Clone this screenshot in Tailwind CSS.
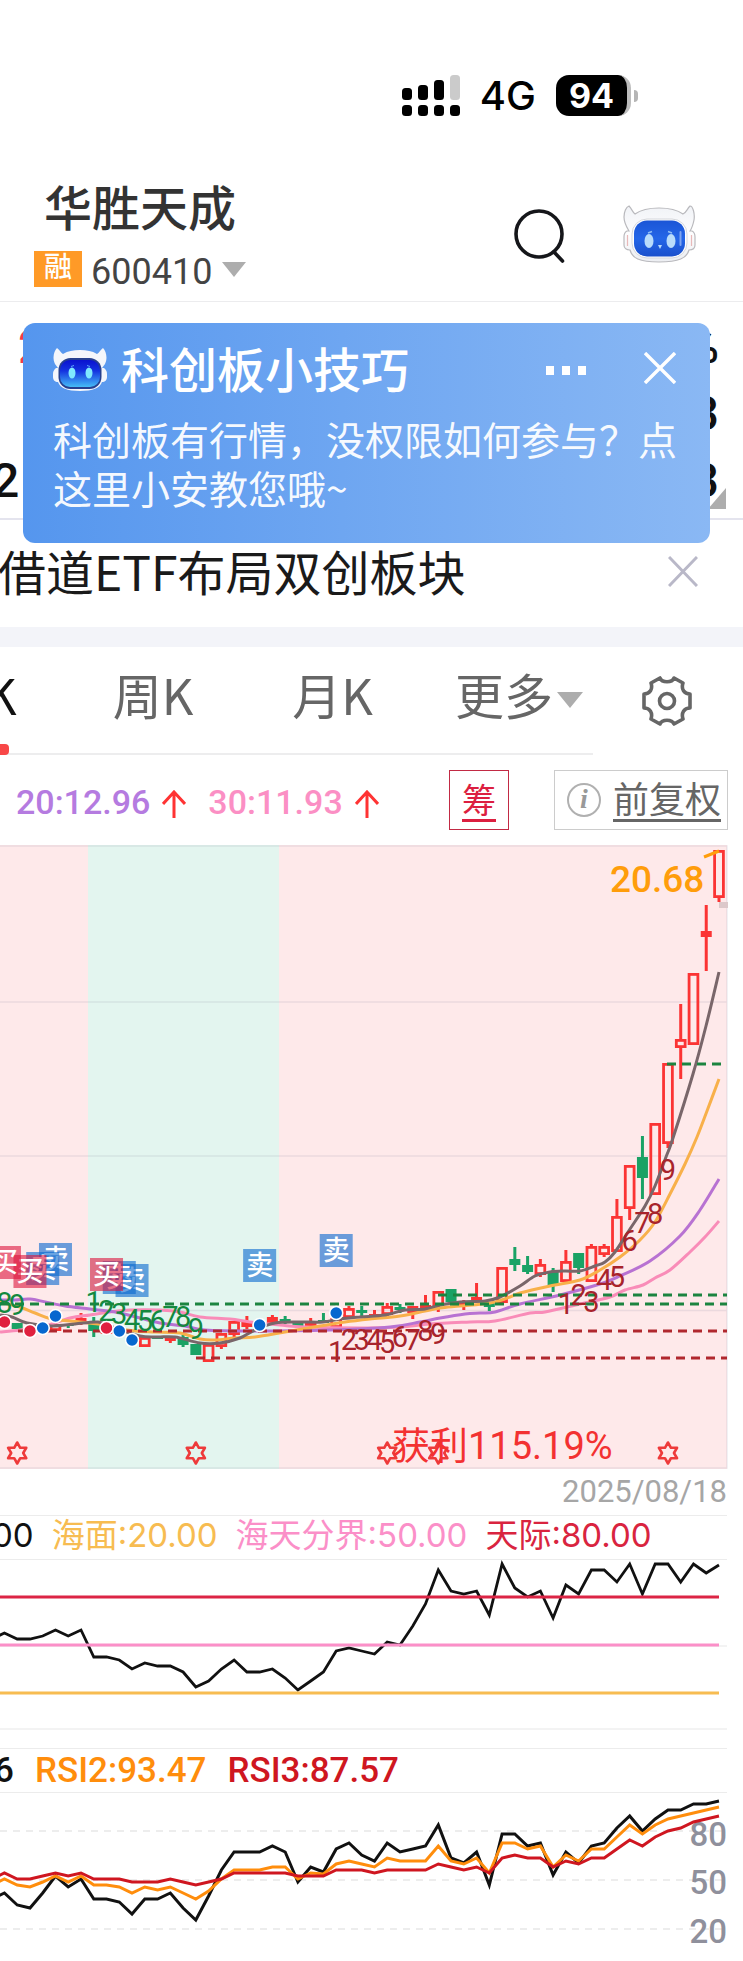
<!DOCTYPE html>
<html lang="zh-CN">
<head>
  <meta charset="UTF-8" />
  <meta name="viewport" content="width=device-width, initial-scale=1.0" />
  <title>华胜天成 600410</title>
  <script src="https://cdn.jsdelivr.net/npm/@tailwindcss/browser@4"></script>
</head>
<body class="bg-white text-[#111] overflow-x-hidden font-['Roboto','Noto_Sans_CJK_SC',sans-serif]">

  <!-- Status bar -->
  <div class="flex items-center justify-end pt-[75px] pr-[105px]">
    <svg class="w-[58px] h-[41px]" viewBox="0 0 58 41" aria-label="信号">
      <rect x="0" y="13" width="10" height="12" rx="3.5" />
      <rect x="16" y="10" width="10" height="15" rx="3.5" />
      <rect x="32" y="5" width="10" height="20" rx="3.5" />
      <rect x="48" y="0" width="10" height="25" rx="3.5" fill="#cbcbcb" />
      <rect x="0" y="30" width="10" height="11" rx="3.5" />
      <rect x="16" y="30" width="10" height="11" rx="3.5" />
      <rect x="32" y="30" width="10" height="11" rx="3.5" />
      <rect x="48" y="30" width="10" height="11" rx="3.5" />
    </svg>
    <span class="ml-5 mr-5 text-[40px] leading-[41px] font-medium font-['Inter'] text-black">4G</span>
    <div class="w-[75px] h-[41px] rounded-[13px] overflow-hidden bg-black border-r-4 border-[#bdbdbd] text-white text-center text-[34px] leading-[41px] font-bold font-['Inter']">94</div>
    <div class="ml-[3px] w-1 h-3 rounded-r-full bg-[#b5b5b5]"></div>
  </div>

  <!-- Header -->
  <header class="flex justify-between pt-[66px] pb-[14px] border-b border-[#ececee]">
    <div>
      <h1 class="pl-11 text-[48px] leading-[56px] font-medium text-[#333]">华胜天成</h1>
      <button class="mt-[13px] ml-[34px] h-9 flex items-center">
        <span class="w-12 h-9 bg-[#ff9a27] text-white text-[28px] leading-[34px] font-medium text-center">融</span>
        <span class="ml-[9px] pt-1.5 text-[36px] leading-9 text-[#444]">600410</span>
        <svg class="ml-[10px] w-6 h-[15px]" viewBox="0 0 24 15"><path d="M0 0H24L12 15Z" fill="#adadad" /></svg>
      </button>
    </div>
    <div class="flex items-start gap-[56px] pt-[22px] pr-[47px]">
      <button aria-label="搜索" class="mt-[5px]">
        <svg class="w-[52px] h-[56px]" viewBox="0 0 52 56" fill="none" stroke="#15161a" stroke-width="3.6">
          <circle cx="25" cy="25" r="23" />
          <path d="M40 43L48.500 52" stroke-linecap="round" />
        </svg>
      </button>
      <button aria-label="智能助手">
        <svg class="w-[74px] h-[62px]" viewBox="0 0 74 62">
          <defs>
            <linearGradient id="shell" x1="0" y1="0" x2="0" y2="1">
              <stop offset="0" stop-color="#f1f3f7" /><stop offset=".5" stop-color="#fdfdfe" /><stop offset="1" stop-color="#eceef2" />
            </linearGradient>
            <linearGradient id="face" x1="0" y1="0" x2="0" y2="1">
              <stop offset="0" stop-color="#1b55d6" /><stop offset=".5" stop-color="#2466e8" /><stop offset="1" stop-color="#1a50cc" />
            </linearGradient>
          </defs>
          <path d="M7 2C10 5 11 9 13 10C20 5 29 4 37 4C45 4 54 5 61 10C64 9 65 5 68 2C71 2 73 10 72 16C71 21 70 24 68 27H70C72 28 73 30 73 33V41C73 44 71 46 67 46C65 54 57 58 37 58C17 58 10 54 8 46C4 46 2 44 2 41V33C2 30 3 28 5 27H7C4 22 2 19 2 13C2 8 4 3 7 2Z" fill="url(#shell)" stroke="#b9b9bd" stroke-width="1.200" />
          <rect x="10" y="15" width="55" height="39" rx="15" fill="#fff" stroke="#d5d7dc" />
          <rect x="12" y="16.500" width="51" height="36" rx="13" fill="url(#face)" />
          <ellipse cx="27" cy="37" rx="4.500" ry="7" fill="#b9dcfb" />
          <ellipse cx="49" cy="37" rx="4.500" ry="7" fill="#b9dcfb" />
          <path d="M26 29L30 27.500M46 27.500L50 29" stroke="#8fbdf5" stroke-width="1.500" />
          <path d="M36 41H40L38 45Z" fill="#b9dcfb" />
          <path d="M58.500 28V41" stroke="#7ea4f0" stroke-width="2" stroke-linecap="round" />
          <path d="M5.500 31V42M69.500 31V42" stroke="#e8b9b9" stroke-width="1.200" />
        </svg>
      </button>
    </div>
  </header>

  <!-- Quote rows with the tip card floating over them -->
  <section class="relative">
    <div class="pt-[11px] pb-1 border-b-2 border-[#e4e4ee] text-[48px] leading-[67px] font-medium">
      <div class="flex justify-between pl-[18px] pr-6"><span class="text-[#f23a4a]">20.68</span><span>%</span></div>
      <div class="flex justify-end pr-6"><span>3</span></div>
      <div class="flex justify-between pr-6"><span class="-ml-2">2</span><span>3</span></div>
    </div>
    <svg class="absolute right-[17px] bottom-[11px] w-[18px] h-[21px]" viewBox="0 0 18 21"><path d="M18 0V21H0Z" fill="#adadad" /></svg>

    <div class="absolute left-[23px] right-[33px] top-[21px] h-[220px] rounded-xl bg-linear-to-r from-[#5596ee] to-[#8ab8f4] text-white">
      <div class="flex items-center h-[68px] mt-[13px] pl-[30px] pr-[34px]">
        <svg class="w-[54px] h-[44px]" viewBox="0 0 54 44">
          <defs>
            <linearGradient id="face2" x1="0" y1="0" x2="0" y2="1">
              <stop offset="0" stop-color="#0a12d0" /><stop offset=".4" stop-color="#1433e0" /><stop offset="1" stop-color="#46bdf6" />
            </linearGradient>
          </defs>
          <path d="M4 0C7 2 8 5 10 6C15 3 20 2 27 2C34 2 39 3 44 6C46 5 47 2 50 0C53 3 55 10 52 16L49 20H51C53 22 54 23 54 26V29C54 32 52 34 49 34C47 40 40 43 27 43C14 43 7 40 5 34C2 34 0 32 0 29V26C0 23 1 22 3 20H5L2 16C-1 10 1 3 4 0Z" fill="#f4f6fb" />
          <rect x="5.500" y="10" width="43" height="31" rx="12" fill="#27408f" />
          <rect x="7" y="12" width="40" height="27" rx="10" fill="url(#face2)" />
          <ellipse cx="19" cy="25" rx="3.500" ry="5.500" fill="#7fe9ff" />
          <ellipse cx="36" cy="25" rx="3.500" ry="5.500" fill="#7fe9ff" />
          <path d="M18 18.500L21 17.500M34 17.500L37 18.500" stroke="#5fa8ff" />
        </svg>
        <h2 class="ml-[14px] pt-1 text-[48px] leading-[64px] font-medium">科创板小技巧</h2>
        <button aria-label="更多选项" class="ml-auto">
          <svg class="w-10 h-[9px]" viewBox="0 0 40 9" fill="#fff"><path d="M0 0H8V9H0ZM16 0H24V9H16ZM32 0H40V9H32Z" /></svg>
        </button>
        <button aria-label="关闭提示" class="ml-[58px] -mt-1">
          <svg class="w-8 h-8" viewBox="0 0 32 32" fill="none" stroke="#fff" stroke-width="3.400"><path d="M1 1L31 31M31 1L1 31" /></svg>
        </button>
      </div>
      <p class="mt-[10px] ml-[30px] text-[39px] leading-[49px] font-['Noto_Sans_CJK_SC',sans-serif] text-white/95 whitespace-nowrap">科创板有行情，没权限如何参与？点<br />这里小安教您哦~</p>
    </div>
  </section>

  <!-- News line -->
  <section class="flex items-center justify-between h-[107px] pb-2 pr-[45px] text-[#1a1a1a]">
    <a href="#" class="-ml-0.5 text-[48px] leading-[60px] font-['Noto_Sans_CJK_SC',sans-serif]">借道ETF布局双创板块</a>
    <button aria-label="关闭资讯" class="mt-1">
      <svg class="w-[30px] h-[31px]" viewBox="0 0 30 31" fill="none" stroke="#b9b8c8" stroke-width="3"><path d="M1 1L29 30M29 1L1 30" /></svg>
    </button>
  </section>
  <div class="h-5 bg-[#f3f4f9]"></div>

  <!-- Period tabs -->
  <nav class="flex items-center h-[108px]">
    <div class="relative flex items-center w-[593px] h-full pb-3 border-b-2 border-[#ededee] text-[49px] leading-[60px] text-[#666] font-['Noto_Sans_CJK_SC',sans-serif] whitespace-nowrap">
      <button class="-ml-16 text-[#111]">日K</button>
      <button class="ml-[96px]">周K</button>
      <button class="ml-[99px]">月K</button>
      <button class="ml-[82px] flex items-center">更多
        <svg class="mt-3 ml-1 w-[26px] h-4" viewBox="0 0 26 16"><path d="M0 0H26L13 16Z" fill="#adadad" /></svg>
      </button>
      <span class="absolute left-0 -bottom-0.5 w-[9px] h-[11px] rounded-r bg-[#f84747]"></span>
    </div>
    <button aria-label="设置" class="ml-[49px]">
      <svg class="w-[50px] h-[50px]" viewBox="0 0 50 50" fill="none" stroke="#666" stroke-width="3.600" stroke-linejoin="round">
        <path d="M18 2C20 7 30 7 32 2L41 7C39 13 42 18 48 18V32C42 32 39 37 41 43L32 48C30 43 20 43 18 48L9 43C11 37 8 32 2 32V18C8 18 11 13 9 7Z" />
        <circle cx="25" cy="25" r="7.500" />
      </svg>
    </button>
  </nav>

  <!-- Moving averages -->
  <section class="flex items-center h-[90px] pl-4 pr-[15px] text-[34px] font-medium">
    <span class="pt-1 text-[#b57be0]">20:12.96</span>
    <svg class="ml-3 mt-2 w-6 h-7" viewBox="0 0 24 28" fill="none" stroke="#f33" stroke-width="3"><path d="M12 28V2M1 14L12 2L23 14" /></svg>
    <span class="ml-[22px] pt-1 text-[#fb8fc4]">30:11.93</span>
    <svg class="ml-3 mt-2 w-6 h-7" viewBox="0 0 24 28" fill="none" stroke="#f33" stroke-width="3"><path d="M12 28V2M1 14L12 2L23 14" /></svg>
    <button class="ml-auto w-[60px] h-[60px] pt-1 flex items-center justify-center border border-[#c22a44] text-[#dc1f40] font-normal"><span class="leading-9 border-b-3">筹</span></button>
    <button class="ml-[45px] w-[174px] h-[60px] flex items-center justify-between pl-3 pr-[6px] border border-[#ccc] text-[#666] text-[36px] font-normal">
      <span class="w-[34px] h-[34px] rounded-full border-2 border-[#b0b0b0] text-[#999] text-[28px] leading-[28px] font-bold italic font-['Liberation_Serif',serif]">i</span>
      <span class="mt-1 leading-9 border-b-3">前复权</span>
    </button>
  </section>

  <!-- Candles -->
  <svg id="kline" class="block w-full" viewBox="0 845 743 624" fill="none">
    <rect x="0" y="845" width="727" height="624" fill="#fee9ea" />
    <rect x="88" y="845" width="191" height="624" fill="#e3f5ef" />
    <g stroke="#8888a0" stroke-opacity=".16" stroke-width="1.500">
      <path d="M0 846H727V1468H0M0 1002H727M0 1156H727M0 1310.500H727" />
    </g>
    <rect x="719" y="902" width="9" height="6" fill="#dcc8ca" />
    <g id="candles"></g>
    <g id="averages" stroke-width="3" stroke-linejoin="round"></g>
    <g stroke="#1c8440" stroke-width="3" stroke-dasharray="9 6">
      <path d="M0 1304H727M438 1295H727M667 1064H727" />
    </g>
    <g stroke="#b0282e" stroke-width="3" stroke-dasharray="9 6">
      <path d="M18 1331H727M196 1358H727" />
    </g>
    <g id="counts" class="text-[29px]" text-anchor="middle"></g>
    <g id="dots" stroke="#fff" stroke-width="1.500"></g>
    <g id="trades" class="text-[27px] font-medium" text-anchor="middle"></g>
    <g id="stars" stroke="#ee3a3a" stroke-width="2.600" stroke-linejoin="round"></g>
    <path d="M704 857L719 851" stroke="#ff9d0b" stroke-width="3" />
    <text x="610" y="892" class="text-[37px] font-medium" fill="#ff9d0b">20.68</text>
    <text x="392" y="1459" class="text-[38px]" fill="#f33131">获利115.19%</text>
  </svg>

  <div class="h-[46px] pr-4 text-right text-[31px] leading-[46px] text-[#a6a6a6]">2025/08/18</div>

  <!-- Oscillator -->
  <div class="flex items-center gap-[18px] h-[45px] pb-1.5 mr-4 -ml-2 border-y border-[#ececec] text-[33px] leading-10 whitespace-nowrap font-['Inter','Noto_Sans_CJK_SC',sans-serif]">
    <span>00</span>
    <span class="text-[#f7bc51]">海面:20.00</span>
    <span class="text-[#fb8fc8]">海天分界:50.00</span>
    <span class="text-[#d9243f]">天际:80.00</span>
  </div>
  <svg class="block w-full" viewBox="0 0 743 170" fill="none" stroke-width="2.800">
    <path d="M0 86H727M0 169H727" stroke="#efefef" stroke-width="1.500" />
    <polyline id="wave" stroke="#111" stroke-width="2.800" />
    <path d="M0 37H719" stroke="#dc2545" />
    <path d="M0 85H719" stroke="#fb8fc8" />
    <path d="M0 133H719" stroke="#f7bc51" />
  </svg>

  <!-- RSI -->
  <div class="flex items-center gap-[21px] h-[45px] mt-[18px] mr-4 -ml-1.5 border-y border-[#ececec] text-[35px] leading-[42px] font-medium">
    <span>6</span>
    <span class="text-[#ff8d0c]">RSI2:93.47</span>
    <span class="text-[#cf1620]">RSI3:87.57</span>
  </div>
  <svg class="block w-full" viewBox="0 0 743 166" fill="none" stroke-width="3">
    <path d="M0 38H727M0 87H727M0 136H727" stroke="#e8e8e8" stroke-width="1.500" stroke-dasharray="7 6" />
    <g class="text-[33px] font-medium" fill="#8f909c" text-anchor="end">
      <text x="727" y="53">80</text>
      <text x="727" y="101">50</text>
      <text x="727" y="150">20</text>
    </g>
    <polyline id="rsi1" stroke="#111" />
    <polyline id="rsi2" stroke="#ff8d0c" />
    <polyline id="rsi3" stroke="#cf1620" />
  </svg>

  <script>
    const NS = 'http://www.w3.org/2000/svg';
    const STEP = 12.76;
    const LAST_X = 719;
    const RED = '#fb3434';
    const GREEN = '#1aa265';

    function add(parent, tag, attrs, text) {
      const el = document.createElementNS(NS, tag);
      for (const key in attrs) el.setAttribute(key, attrs[key]);
      if (text) el.textContent = text;
      document.getElementById(parent).appendChild(el);
    }

    // bars are counted from the newest one, on the right
    const barX = (i) => LAST_X - STEP * i;

    // --- Candles: [bar, kind, high, body top, body bottom, low] ---
    // h = hollow red, r = solid red, g = green
    const candles = [
      [0, 'h', 850, 850, 898, 902], [1, 'r', 905, 931, 937, 971], [2, 'h', 973, 973, 1045, 1045],
      [3, 'h', 1004, 1039, 1048, 1079], [4, 'h', 1063, 1063, 1144, 1148], [5, 'h', 1123, 1123, 1195, 1195],
      [6, 'g', 1136, 1157, 1178, 1199], [7, 'h', 1165, 1165, 1209, 1220], [8, 'h', 1199, 1216, 1252, 1252],
      [9, 'h', 1244, 1246, 1255, 1257], [10, 'h', 1244, 1246, 1282, 1282], [11, 'g', 1253, 1253, 1268, 1274],
      [12, 'h', 1250, 1261, 1282, 1282], [13, 'g', 1268, 1272, 1286, 1292], [14, 'h', 1259, 1264, 1275, 1277],
      [15, 'g', 1256, 1265, 1272, 1274], [16, 'g', 1247, 1259, 1265, 1271], [17, 'h', 1267, 1267, 1303, 1303],
      [18, 'g', 1302, 1303, 1307, 1311], [19, 'r', 1283, 1297, 1302, 1302], [20, 'r', 1300, 1303, 1306, 1310],
      [21, 'g', 1289, 1289, 1302, 1302], [22, 'h', 1291, 1291, 1306, 1312], [23, 'r', 1295, 1305, 1308, 1308],
      [24, 'r', 1306, 1306, 1313, 1319], [25, 'g', 1304, 1307, 1310, 1313], [26, 'h', 1303, 1306, 1315, 1317],
      [27, 'r', 1310, 1314, 1317, 1317], [28, 'g', 1306, 1310, 1313, 1316], [29, 'h', 1306, 1308, 1318, 1318],
      [30, 'h', 1312, 1318, 1328, 1328], [31, 'g', 1313, 1320, 1323, 1323], [32, 'h', 1318, 1323, 1328, 1328],
      [33, 'g', 1323, 1323, 1327, 1327], [34, 'g', 1316, 1319, 1322, 1324], [35, 'r', 1315, 1317, 1323, 1323],
      [37, 'r', 1316, 1321, 1327, 1329], [38, 'h', 1321, 1321, 1335, 1337], [39, 'h', 1333, 1333, 1347, 1349],
      [40, 'h', 1344, 1344, 1362, 1362], [41, 'g', 1344, 1344, 1355, 1355], [42, 'g', 1335, 1337, 1345, 1347],
      [43, 'r', 1336, 1338, 1341, 1343], [44, 'g', 1336, 1336, 1339, 1339], [45, 'h', 1337, 1337, 1347, 1347],
      [48, 'h', 1324, 1326, 1334, 1334], [49, 'g', 1317, 1323, 1331, 1337], [50, 'r', 1313, 1318, 1322, 1325],
      [51, 'g', 1324, 1324, 1326, 1328], [52, 'h', 1320, 1324, 1331, 1331], [55, 'g', 1323, 1323, 1329, 1329],
    ];
    candles.forEach(([i, kind, high, top, bottom, low]) => {
      const x = barX(i);
      const color = kind === 'g' ? GREEN : RED;
      add('candles', 'path', { d: `M${x} ${high}V${top}M${x} ${bottom}V${low}`, stroke: color, 'stroke-width': 3 });
      if (kind === 'h') {
        add('candles', 'rect', { x: x - 4.4, y: top + 1.4, width: 8.8, height: bottom - top - 2.8, stroke: color, 'stroke-width': 2.8 });
      } else {
        add('candles', 'rect', { x: x - 5.5, y: top, width: 11, height: bottom - top, fill: color });
      }
    });

    // --- Moving averages, drawn as smooth curves ---
    function smooth(pts) {
      let d = `M${pts[0]}`;
      for (let i = 0; i < pts.length - 1; i++) {
        const [a, b, c, e] = [pts[i - 1] || pts[i], pts[i], pts[i + 1], pts[i + 2] || pts[i + 1]];
        d += `C${b[0] + (c[0] - a[0]) / 6} ${b[1] + (c[1] - a[1]) / 6} ${c[0] - (e[0] - b[0]) / 6} ${c[1] - (e[1] - b[1]) / 6} ${c}`;
      }
      return d;
    }
    const averages = {
      '#f98cb8': [[0, 1332], [20, 1330], [45, 1326], [70, 1318], [90, 1315], [110, 1312], [130, 1310], [160, 1310], [180, 1312], [200, 1317], [230, 1319], [250, 1322], [280, 1325], [305, 1327], [360, 1328], [400, 1327], [430, 1324], [470, 1322], [495, 1321], [530, 1313], [545, 1312], [580, 1304], [610, 1297], [625, 1290], [643, 1285], [655, 1278], [670, 1270], [690, 1252], [705, 1237], [719, 1221]],
      '#b872d2': [[0, 1300], [15, 1300], [30, 1299], [50, 1303], [65, 1306], [90, 1309], [115, 1312], [140, 1318], [160, 1323], [185, 1326], [205, 1330], [250, 1331], [330, 1330], [390, 1327], [420, 1322], [440, 1318], [465, 1314], [480, 1313], [495, 1312], [520, 1304], [560, 1295], [600, 1284], [620, 1276], [650, 1261], [680, 1236], [700, 1210], [719, 1179]],
      '#f8b04a': [[0, 1302], [20, 1307], [35, 1313], [52, 1319], [80, 1322], [105, 1325], [115, 1328], [135, 1331], [155, 1332], [180, 1333], [200, 1339], [215, 1340], [235, 1338], [255, 1337], [285, 1332], [320, 1326], [345, 1322], [370, 1319], [400, 1316], [425, 1311], [440, 1308], [460, 1306], [490, 1303], [510, 1297], [520, 1293], [550, 1286], [580, 1280], [600, 1270], [620, 1257], [640, 1240], [655, 1222], [670, 1194], [685, 1164], [697, 1137], [707, 1111], [719, 1079]],
      '#79666a': [[0, 1315], [12, 1317], [27, 1323], [52, 1326], [75, 1324], [98, 1322], [115, 1328], [140, 1336], [157, 1337], [175, 1337], [200, 1343], [220, 1343], [240, 1338], [255, 1330], [275, 1323], [300, 1322], [323, 1322], [340, 1319], [360, 1317], [385, 1315], [405, 1310], [425, 1309], [440, 1305], [460, 1302], [485, 1301], [500, 1297], [520, 1286], [535, 1276], [550, 1272], [565, 1271], [580, 1271], [595, 1266], [605, 1262], [615, 1252], [630, 1229], [645, 1206], [655, 1186], [666, 1157], [673, 1138], [693, 1074], [706, 1026], [719, 972]],
    };
    for (const color in averages) add('averages', 'path', { d: smooth(averages[color]), stroke: color });

    // --- Nine-turn counts: [bar of the first digit, first digit, colour, baselines] ---
    const counts = [
      [56, 8, '#13893f', [1313, 1315]],
      [49, 1, '#13893f', [1312, 1321, 1324, 1330, 1331, 1331, 1327, 1327, 1339]],
      [30, 1, '#a8232b', [1362, 1350, 1350, 1350, 1353, 1347, 1350, 1341, 1344]],
      [12, 1, '#a8232b', [1314, 1305, 1312, 1290, 1287, 1251, 1233, 1224, 1180]],
    ];
    counts.forEach(([bar, first, color, ys]) => ys.forEach((y, k) => {
      add('counts', 'text', { x: barX(bar - k), y, fill: color }, String(first + k));
    }));

    // --- Trades ---
    const dots = [[56, 1322, 'b'], [54, 1331, 'b'], [53, 1328, 's'], [52, 1316, 's'], [48, 1328, 'b'], [47, 1331, 's'], [46, 1340, 's'], [36, 1325, 's'], [30, 1313, 's']];
    dots.forEach(([i, y, side]) => add('dots', 'circle', { cx: barX(i), cy: y, r: 6.5, fill: side === 'b' ? '#e0213f' : '#0767cf' }));

    const trades = [[30, 1234, 's'], [36, 1249, 's'], [46, 1264, 's'], [47, 1261, 's'], [48, 1258, 'b'], [52, 1243, 's'], [53, 1252, 's'], [54, 1255, 'b'], [56, 1246, 'b']];
    trades.forEach(([i, y, side]) => {
      const x = barX(i);
      add('trades', 'rect', { x: x - 16.5, y, width: 33, height: 33, fill: side === 'b' ? '#dc143c' : '#0767cf', 'fill-opacity': .6 });
      add('trades', 'text', { x, y: y + 26, fill: '#fff' }, side === 'b' ? '买' : '卖');
    });

    [55, 41, 26, 22, 4].forEach((i) => {
      let d = '';
      for (let k = 0; k < 12; k++) {
        const r = k % 2 ? 6 : 10.5;
        const a = Math.PI / 6 * k;
        d += `${k ? 'L' : 'M'}${barX(i) + r * Math.sin(a)} ${1453 - r * Math.cos(a)}`;
      }
      add('stars', 'path', { d: d + 'Z' });
    });

    // --- Lower panels: one value per bar, oldest first ---
    const panels = {
      wave: [73, 79, 79, 76, 70, 76, 70, 97, 97, 100, 109, 103, 106, 106, 112, 127, 121, 109, 100, 112, 112, 109, 118, 130, 121, 112, 91, 88, 91, 94, 82, 85, 66, 44, 10, 31, 34, 31, 55, 4, 28, 37, 31, 58, 25, 34, 10, 10, 22, 4, 34, 4, 4, 22, 4, 13, 5],
      rsi1: [100, 112, 115, 100, 83, 94, 86, 106, 106, 109, 121, 106, 106, 100, 115, 127, 103, 77, 59, 59, 59, 53, 59, 89, 74, 79, 56, 50, 62, 68, 50, 59, 56, 53, 32, 65, 70, 59, 92, 41, 41, 53, 50, 82, 59, 70, 53, 50, 35, 23, 38, 26, 17, 17, 11, 11, 8],
      rsi2: [86, 92, 94, 89, 83, 89, 83, 92, 92, 94, 100, 94, 97, 94, 100, 106, 98, 86, 77, 77, 77, 74, 74, 86, 80, 81, 71, 68, 71, 74, 65, 68, 68, 68, 53, 68, 71, 65, 80, 50, 50, 56, 53, 74, 62, 68, 56, 56, 44, 32, 41, 32, 26, 23, 20, 17, 14],
      rsi3: [80, 86, 86, 83, 80, 83, 80, 86, 86, 86, 89, 89, 89, 86, 89, 92, 89, 86, 80, 80, 80, 80, 80, 83, 83, 83, 77, 77, 77, 80, 77, 77, 77, 77, 71, 74, 77, 74, 80, 65, 62, 65, 65, 74, 68, 71, 65, 65, 56, 47, 53, 44, 38, 35, 29, 26, 23],
    };
    for (const id in panels) {
      const values = [panels[id][0] + 6, ...panels[id]];
      const pts = values.map((y, k) => `${barX(values.length - 1 - k).toFixed(1)},${y}`);
      document.getElementById(id).setAttribute('points', pts.join(' '));
    }
  </script>
</body>
</html>
